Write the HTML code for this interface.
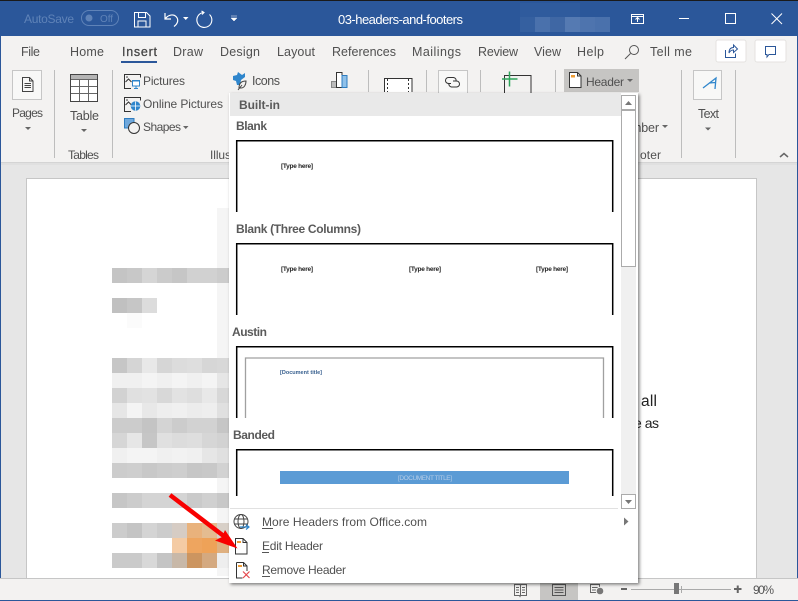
<!DOCTYPE html>
<html><head><meta charset="utf-8"><title>03-headers-and-footers</title>
<style>
html,body{margin:0;padding:0;background:#fff;width:798px;height:601px;overflow:hidden}
svg{display:block;font-family:"Liberation Sans",sans-serif}
.t{font-size:12.5px;fill:#505050}
.m{font-size:12px;fill:#505050}
.b{font-size:12px;font-weight:bold;fill:#5a5a5a}
.a{fill:#666}
</style></head><body>
<svg width="798" height="601" viewBox="0 0 798 601" xmlns="http://www.w3.org/2000/svg">
<defs><filter id="sh" x="-5%" y="-5%" width="110%" height="110%"><feDropShadow dx="1.5" dy="1.5" stdDeviation="1.5" flood-color="#000" flood-opacity=".5"/></filter></defs>
<!-- window -->
<rect width="798" height="601" fill="#e6e6e6"/>
<rect width="798" height="1" fill="#1a1a1a"/>
<rect y="1" width="798" height="35" fill="#2b579a"/>
<rect x="520" y="3" width="60" height="14" fill="#2f5b9d"/>
<rect x="520" y="17" width="15" height="15" fill="#3560a0"/>
<rect x="535" y="17" width="15" height="15" fill="#4a71ac"/>
<rect x="550" y="17" width="15" height="15" fill="#3f67a4"/>
<rect x="565" y="17" width="15" height="15" fill="#557ab2"/>
<rect x="580" y="17" width="15" height="15" fill="#4e74ae"/>
<rect x="595" y="17" width="15" height="15" fill="#4a71ac"/>
<!-- title bar -->
<text x="24" y="23" font-size="12" fill="#5f83b8" textLength="50">AutoSave</text>
<rect x="81.500" y="10.500" width="37" height="15" rx="7.500" fill="none" stroke="#5f83b8"/>
<circle cx="89" cy="18" r="3.500" fill="#5f83b8"/>
<text x="100" y="22" font-size="10" fill="#5f83b8" textLength="13">Off</text>
<path d="M134.500 12.500h12l3.500 3.500v11h-15.500zM138.500 12.500v5h7v-5M138 27v-6h8v6" fill="none" stroke="#fff"/>
<path d="M165 13v6h6M165.500 18.500c3-4 8-4.500 10.500-2 3 3 2 7-2 10" fill="none" stroke="#fff" stroke-width="1.200"/>
<path d="M183 17h5.500l-2.750 3z" fill="#fff"/>
<path d="M209.500 14.500A7.500 7.500 0 1 1 203.500 12.500M201.500 11l2.500 1.500-2 2" fill="none" stroke="#fff" stroke-width="1.100"/>
<path d="M231 16h6M231 18h6l-3 3z" fill="#fff" stroke="#fff" stroke-width=".5"/>
<text x="338" y="24" font-size="13" fill="#fff" textLength="125">03-headers-and-footers</text>
<path d="M631.500 14.500h12v9h-12zM631.500 16.500h12M637.500 22v-4M635.500 19.500l2-2 2 2" fill="none" stroke="#fff"/>
<rect x="679" y="18" width="10" height="1" fill="#fff"/>
<rect x="725.500" y="13.500" width="10" height="10" fill="none" stroke="#fff"/>
<path d="M771.500 13.500l10.500 10.500M782 13.500l-10.500 10.500" stroke="#fff" fill="none"/>
<!-- ribbon -->
<rect y="36" width="798" height="126" fill="#f3f2f1"/>
<rect y="162" width="798" height="1" fill="#d4d4d4"/>
<rect y="163" width="798" height="2" fill="#e0e0e0"/>
<rect y="36" width="1" height="565" fill="#2b579a"/>
<rect x="797" y="36" width="1" height="565" fill="#2b579a"/>
<!-- tabs -->
<g class="t">
<text x="21" y="56" textLength="19">File</text>
<text x="70" y="56" textLength="34">Home</text>
<text x="122" y="56" textLength="35" style="fill:#444;stroke:#444;stroke-width:.25">Insert</text>
<text x="173" y="56" textLength="30">Draw</text>
<text x="220" y="56" textLength="40">Design</text>
<text x="277" y="56" textLength="38">Layout</text>
<text x="332" y="56" textLength="64">References</text>
<text x="412" y="56" textLength="49">Mailings</text>
<text x="478" y="56" textLength="40">Review</text>
<text x="534" y="56" textLength="27">View</text>
<text x="577" y="56" textLength="27">Help</text>
<text x="650" y="56" textLength="42">Tell me</text>
</g>
<rect x="121" y="61" width="36" height="2" fill="#2b579a"/>
<circle cx="634" cy="50" r="4.500" fill="none" stroke="#555"/>
<path d="M630.500 53.500L625 59" stroke="#555" fill="none"/>
<rect x="716" y="40" width="30" height="22" rx="2" fill="#fff" stroke="#e4e2e0"/>
<path d="M725.500 50v7.500h10v-4M729 53c0-4 2-5.500 4.500-5.500v-2.500l4 4-4 3.500v-2.500c-2 0-3.500 1-4.500 3z" fill="none" stroke="#2b579a"/>
<rect x="755" y="40" width="31" height="22" rx="2" fill="#fff" stroke="#e4e2e0"/>
<path d="M765.500 46.500h10v8h-6.500l-2 2.500v-2.500h-1.500z" fill="none" stroke="#2b579a"/>
<!-- separators -->
<g fill="#bdbdbd">
<rect x="54" y="70" width="1" height="88"/><rect x="112" y="70" width="1" height="88"/>
<rect x="368" y="70" width="1" height="22"/><rect x="426" y="70" width="1" height="22"/>
<rect x="480" y="70" width="1" height="22"/><rect x="555" y="70" width="1" height="22"/>
<rect x="681" y="70" width="1" height="88"/><rect x="735" y="70" width="1" height="88"/>
</g>
<!-- pages -->
<rect x="12.500" y="70.500" width="29" height="29" fill="#f8f8f7" stroke="#c6c6c6"/>
<path d="M22.500 77.500h7l3.500 3.500v10.500h-10.500zM29.500 77.500v3.500h3.500M24.500 83.500h6.500M24.500 85.500h6.500M24.500 87.500h6.500" fill="none" stroke="#444"/>
<text x="12" y="117" class="m" textLength="31">Pages</text>
<path class="a" d="M25 127h6l-3 3z"/>
<!-- table -->
<rect x="70.500" y="74.500" width="27" height="27" fill="#fff" stroke="#444"/>
<rect x="71" y="75" width="26" height="4" fill="#b5b5b5"/>
<path d="M71 79.500h26M71 86.500h26M71 93.500h26M79.500 79v22M88.500 79v22" stroke="#666" fill="none"/>
<text x="70" y="120" class="t" textLength="29">Table</text>
<path class="a" d="M81 129h6l-3 3z"/>
<text x="68" y="159" class="m" textLength="31">Tables</text>
<!-- illustrations -->
<path d="M124.500 82v-7.500h16v3M124.500 82v6.500h6.500M125.500 82l3-3 3 3" fill="none" stroke="#333"/>
<circle cx="127" cy="77" r=".8" fill="#333"/>
<rect x="132.500" y="80.500" width="7" height="5.500" fill="#fff" stroke="#2f86cc"/><path d="M132 81h8M136 86v2M134 88.500h4" stroke="#2f86cc" fill="none"/>
<text x="143" y="85" class="m" textLength="42">Pictures</text>
<path d="M124.500 105v-7.500h16v3M124.500 105v6.500h6.500M125.500 105l3-3 3 3" fill="none" stroke="#333"/>
<circle cx="127" cy="100" r=".8" fill="#333"/>
<circle cx="135.500" cy="106" r="4.800" fill="#2f86cc"/><path d="M131 106h9M135.500 101.500v9" stroke="#fff" stroke-width=".8"/>
<text x="143" y="108" class="m" textLength="80">Online Pictures</text>
<rect x="124.500" y="118.500" width="9.500" height="9.500" fill="#6fa8dc" stroke="#2f7dc0"/>
<circle cx="134" cy="128" r="5.500" fill="#f3f2f1" stroke="#333"/>
<text x="143" y="131" class="m" textLength="38">Shapes</text>
<path class="a" d="M183 126h5.500l-2.750 3z"/>
<path d="M233 76l4-1 1-3 4 3 3-2v4l-4 3-1 5h-3l-1-4-3-1z" fill="#2f86cc"/>
<path d="M239 88c0-4 2-7 7-7 0 4-2 7-5 7h-2zM238 90l4-5" fill="#f3f2f1" stroke="#444"/>
<text x="252" y="85" class="t" textLength="28">Icons</text>
<rect x="331.500" y="81.500" width="5" height="6" fill="#bbb" stroke="#888"/>
<rect x="336.500" y="72.500" width="5.500" height="15" fill="#fff" stroke="#333"/>
<rect x="342" y="75.500" width="5" height="12" fill="#8fc1ea" stroke="#2f7dc0"/>
<text x="210" y="159" class="m" textLength="21">Illus</text>
<!-- partially hidden group -->
<path d="M384.500 92v-13.500h27.500V92" fill="#fff" stroke="#333"/>
<path d="M387.500 79v13M408.500 79v13" stroke="#333" stroke-dasharray="2 2" fill="none"/>
<rect x="438.500" y="70.500" width="29" height="23" fill="#f8f8f7" stroke="#c6c6c6"/>
<path d="M451 83.500h-2.500a3 3 0 0 1 0-6h5a3 3 0 0 1 2.500 4M453 81h3.500a3 3 0 0 1 0 6h-5a3 3 0 0 1-2.500-4" fill="none" stroke="#333"/>
<path d="M504.500 93v-17.500h26.500V93" fill="none" stroke="#333"/>
<path d="M502 79h15.500M509.500 71.500v15" stroke="#2da55a" stroke-width="1.500" fill="none"/>
<!-- header button -->
<rect x="564" y="69" width="75" height="23" fill="#c6c5c3"/>
<path d="M569.500 72.500h8l3.500 3.500v11.500h-11.500z" fill="#fff" stroke="#333"/>
<path d="M577.500 72.500v3.500h3.500" fill="none" stroke="#333"/>
<rect x="571" y="75" width="4" height="2.500" fill="#ed9b33"/>
<text x="586" y="86" class="m" textLength="38">Header</text>
<path class="a" d="M627 79h6l-3 3z"/>
<text x="631" y="132" class="t" textLength="28">mber</text>
<path class="a" d="M662 125h6l-3 3z"/>
<text x="640" y="159" class="m" textLength="21">oter</text>
<!-- text -->
<rect x="693.500" y="70.500" width="28" height="29" fill="#f8f8f7" stroke="#c6c6c6"/>
<path d="M703 88L716 78l-1 11M709 83l6.500-.500" fill="none" stroke="#2f86cc" stroke-width="1.300"/>
<text x="698" y="118" class="t" textLength="21">Text</text>
<path class="a" d="M705 127.500h6l-3 3z"/>
<path d="M780 157l4-3.500 4 3.500" fill="none" stroke="#666" stroke-width="1.500"/>
<!-- page -->
<rect x="26.500" y="178.500" width="730" height="410" fill="#fff" stroke="#c6c6c6"/>
<text x="641" y="406" font-size="15.500" fill="#222" textLength="16">all</text>
<text x="634" y="428" font-size="14" fill="#222" textLength="25">e as</text>
<!-- pixel blocks -->
<rect x="217" y="208" width="12" height="368" fill="#f5f5f5"/>
<g shape-rendering="crispEdges">
<g><rect x="112" y="268" width="15" height="15" fill="#c4c4c4"/><rect x="127" y="268" width="15" height="15" fill="#c8c8c8"/><rect x="142" y="268" width="15" height="15" fill="#d5d5d5"/><rect x="157" y="268" width="15" height="15" fill="#cbcbcb"/><rect x="172" y="268" width="15" height="15" fill="#c6c6c6"/><rect x="187" y="268" width="15" height="15" fill="#d1d1d1"/><rect x="202" y="268" width="15" height="15" fill="#d1d1d1"/><rect x="217" y="268" width="12" height="15" fill="#cccccc"/></g>
<g><rect x="112" y="298" width="15" height="15" fill="#c0c0c0"/><rect x="127" y="298" width="15" height="15" fill="#c6c6c6"/><rect x="142" y="298" width="15" height="15" fill="#dcdcdc"/><rect x="127" y="313" width="15" height="15" fill="#fbfbfb"/></g>
<g><rect x="112" y="358" width="15" height="15" fill="#c6c6c6"/><rect x="127" y="358" width="15" height="15" fill="#d5d5d5"/><rect x="142" y="358" width="15" height="15" fill="#e8e8e8"/><rect x="157" y="358" width="15" height="15" fill="#d6d6d6"/><rect x="172" y="358" width="15" height="15" fill="#dcdcdc"/><rect x="187" y="358" width="15" height="15" fill="#dedede"/><rect x="202" y="358" width="15" height="15" fill="#d6d6d6"/><rect x="217" y="358" width="12" height="15" fill="#d8d8d8"/></g>
<g><rect x="112" y="373" width="15" height="15" fill="#f0f0f0"/><rect x="127" y="373" width="15" height="15" fill="#f0f0f0"/><rect x="142" y="373" width="15" height="15" fill="#f4f4f4"/><rect x="157" y="373" width="15" height="15" fill="#f0f0f0"/><rect x="172" y="373" width="15" height="15" fill="#f4f4f4"/><rect x="187" y="373" width="15" height="15" fill="#f0f0f0"/><rect x="202" y="373" width="15" height="15" fill="#f4f4f4"/><rect x="217" y="373" width="12" height="15" fill="#e6e6e6"/></g>
<g><rect x="112" y="388" width="15" height="15" fill="#d2d2d2"/><rect x="127" y="388" width="15" height="15" fill="#e0e0e0"/><rect x="142" y="388" width="15" height="15" fill="#e2e2e2"/><rect x="157" y="388" width="15" height="15" fill="#d8d8d8"/><rect x="172" y="388" width="15" height="15" fill="#e2e2e2"/><rect x="187" y="388" width="15" height="15" fill="#dedede"/><rect x="202" y="388" width="15" height="15" fill="#e8e8e8"/><rect x="217" y="388" width="12" height="15" fill="#d8d8d8"/></g>
<g><rect x="112" y="403" width="15" height="15" fill="#e6e6e6"/><rect x="127" y="403" width="15" height="15" fill="#f4f4f4"/><rect x="142" y="403" width="15" height="15" fill="#e8e8e8"/><rect x="157" y="403" width="15" height="15" fill="#eeeeee"/><rect x="172" y="403" width="15" height="15" fill="#f0f0f0"/><rect x="187" y="403" width="15" height="15" fill="#ececec"/><rect x="202" y="403" width="15" height="15" fill="#eeeeee"/><rect x="217" y="403" width="12" height="15" fill="#e0e0e0"/></g>
<g><rect x="112" y="418" width="15" height="15" fill="#cccccc"/><rect x="127" y="418" width="15" height="15" fill="#cccccc"/><rect x="142" y="418" width="15" height="15" fill="#c4c4c4"/><rect x="157" y="418" width="15" height="15" fill="#d4d4d4"/><rect x="172" y="418" width="15" height="15" fill="#cccccc"/><rect x="187" y="418" width="15" height="15" fill="#d2d2d2"/><rect x="202" y="418" width="15" height="15" fill="#d2d2d2"/><rect x="217" y="418" width="12" height="15" fill="#c6c6c6"/></g>
<g><rect x="112" y="433" width="15" height="15" fill="#d6d6d6"/><rect x="127" y="433" width="15" height="15" fill="#e6e6e6"/><rect x="142" y="433" width="15" height="15" fill="#c6c6c6"/><rect x="157" y="433" width="15" height="15" fill="#e0e0e0"/><rect x="172" y="433" width="15" height="15" fill="#dcdcdc"/><rect x="187" y="433" width="15" height="15" fill="#dedede"/><rect x="202" y="433" width="15" height="15" fill="#d6d6d6"/><rect x="217" y="433" width="12" height="15" fill="#d2d2d2"/></g>
<g><rect x="112" y="448" width="15" height="15" fill="#f0f0f0"/><rect x="127" y="448" width="15" height="15" fill="#f4f4f4"/><rect x="142" y="448" width="15" height="15" fill="#f4f4f4"/><rect x="157" y="448" width="15" height="15" fill="#f0f0f0"/><rect x="172" y="448" width="15" height="15" fill="#f2f2f2"/><rect x="187" y="448" width="15" height="15" fill="#f0f0f0"/><rect x="202" y="448" width="15" height="15" fill="#e6e6e6"/><rect x="217" y="448" width="12" height="15" fill="#e0e0e0"/></g>
<g><rect x="112" y="463" width="15" height="15" fill="#cccccc"/><rect x="127" y="463" width="15" height="15" fill="#cecece"/><rect x="142" y="463" width="15" height="15" fill="#c8c8c8"/><rect x="157" y="463" width="15" height="15" fill="#cccccc"/><rect x="172" y="463" width="15" height="15" fill="#cecece"/><rect x="187" y="463" width="15" height="15" fill="#c6c6c6"/><rect x="202" y="463" width="15" height="15" fill="#c8c8c8"/><rect x="217" y="463" width="12" height="15" fill="#d2d2d2"/></g>
<g><rect x="112" y="493" width="15" height="15" fill="#c6c6c6"/><rect x="127" y="493" width="15" height="15" fill="#cccccc"/><rect x="142" y="493" width="15" height="15" fill="#d4d4d4"/><rect x="157" y="493" width="15" height="15" fill="#d4d4d4"/><rect x="172" y="493" width="15" height="15" fill="#d4d4d4"/><rect x="187" y="493" width="15" height="15" fill="#cacaca"/><rect x="202" y="493" width="15" height="15" fill="#d0d0d0"/><rect x="217" y="493" width="12" height="15" fill="#c8c8c8"/></g>
<g><rect x="112" y="523" width="15" height="15" fill="#cccccc"/><rect x="127" y="523" width="15" height="15" fill="#c4c4c4"/><rect x="142" y="523" width="15" height="15" fill="#d4d4d4"/><rect x="157" y="523" width="15" height="15" fill="#cccccc"/><rect x="172" y="523" width="15" height="15" fill="#d6ccc4"/><rect x="187" y="523" width="15" height="15" fill="#e9b27c"/><rect x="202" y="523" width="15" height="15" fill="#e4bc90"/><rect x="217" y="523" width="12" height="15" fill="#d8d0c8"/></g>
<g><rect x="172" y="538" width="15" height="15" fill="#f4cba4"/><rect x="187" y="538" width="15" height="15" fill="#eea55f"/><rect x="202" y="538" width="15" height="15" fill="#eea258"/><rect x="217" y="538" width="12" height="15" fill="#dfb080"/></g>
<g><rect x="112" y="553" width="15" height="15" fill="#cacaca"/><rect x="127" y="553" width="15" height="15" fill="#cacaca"/><rect x="142" y="553" width="15" height="15" fill="#d8d8d8"/><rect x="157" y="553" width="15" height="15" fill="#c4c4c4"/><rect x="172" y="553" width="15" height="15" fill="#c8b8a8"/><rect x="187" y="553" width="15" height="15" fill="#cc9560"/><rect x="202" y="553" width="15" height="15" fill="#d4a980"/><rect x="217" y="553" width="12" height="15" fill="#eeeeee"/></g>
</g>
<!-- status bar -->
<rect y="578" width="798" height="22" fill="#f3f2f1"/>
<rect y="578" width="798" height="1" fill="#c6c6c6"/>
<rect y="600" width="798" height="1" fill="#2b579a"/>
<rect x="540" y="583" width="38" height="17" fill="#c6c5c3"/>
<path d="M514.500 584.500h5.500l.5 1 .5-1h5.500v11h-6l-.5 1-.5-1h-5zM520.500 585v11M516 587.500h3M516 590h3M516 592.500h3M522 587.500h3M522 590h3M522 592.500h3" fill="none" stroke="#666"/>
<path d="M552.500 584.500h13v11h-13zM554.500 587.500h9M554.500 590h9M554.500 592.500h9" fill="none" stroke="#555"/>
<path d="M590.500 584.500h9v8h-9zM592 587.500h6M592 590h4" fill="none" stroke="#666"/>
<circle cx="600" cy="591" r="3.800" fill="#777" stroke="#f3f2f1"/>
<rect x="621" y="588" width="6" height="2" fill="#666"/>
<rect x="631" y="589" width="100" height="1" fill="#aaa"/>
<rect x="681" y="586" width="1" height="7" fill="#aaa"/>
<rect x="674" y="583" width="5" height="11" fill="#777"/>
<path d="M734 589h7.500M737.750 585.500v7.500" stroke="#666" stroke-width="2" fill="none"/>
<text x="753" y="594" font-size="12" fill="#555" textLength="21">90%</text>
<!-- dropdown -->
<rect x="229" y="93" width="409" height="490" fill="#fff" filter="url(#sh)"/>
<rect x="230" y="93" width="391" height="23" fill="#e9e9e9"/>
<text x="239" y="109" class="b" textLength="41">Built-in</text>
<text x="236" y="130" class="b" textLength="31">Blank</text>
<path d="M236.700 212V140.700H612.700V212" fill="none" stroke="#000" stroke-width="1.500"/>
<text x="281" y="168" font-size="6.500" font-weight="bold" fill="#222" textLength="32">[Type here]</text>
<text x="236" y="233" class="b" textLength="125">Blank (Three Columns)</text>
<path d="M236.700 315V243.700H612.700V315" fill="none" stroke="#000" stroke-width="1.500"/>
<text x="281" y="271" font-size="6.500" font-weight="bold" fill="#222" textLength="32">[Type here]</text>
<text x="409" y="271" font-size="6.500" font-weight="bold" fill="#222" textLength="32">[Type here]</text>
<text x="536" y="271" font-size="6.500" font-weight="bold" fill="#222" textLength="32">[Type here]</text>
<text x="232" y="336" class="b" textLength="35">Austin</text>
<path d="M236.700 418V346.700H612.700V418" fill="none" stroke="#000" stroke-width="1.500"/>
<path d="M245.500 418V358H603.500V418" fill="none" stroke="#a0a0a0" stroke-width="1.300"/>
<text x="280" y="374" font-size="5.500" font-weight="bold" fill="#38608f" textLength="42">[Document title]</text>
<text x="233" y="439" class="b" textLength="42">Banded</text>
<path d="M236.700 496V449.700H612.700V496" fill="none" stroke="#000" stroke-width="1.500"/>
<rect x="280" y="471" width="289" height="13" fill="#5b9bd5"/>
<text x="398" y="480" font-size="6.500" fill="#b5cce6" textLength="54">[DOCUMENT TITLE]</text>
<!-- scrollbar -->
<rect x="621" y="95" width="15" height="414" fill="#f0f0f0"/>
<rect x="621.500" y="95.500" width="14" height="14" fill="#fff" stroke="#ababab"/>
<path d="M625 105h7l-3.500-4z" fill="#777"/>
<rect x="621.500" y="110.500" width="14" height="156" fill="#fff" stroke="#ababab"/>
<rect x="621.500" y="494.500" width="14" height="14" fill="#fff" stroke="#ababab"/>
<path d="M625 500h7l-3.500 4z" fill="#777"/>
<rect x="230" y="508" width="388" height="1" fill="#e1e1e1"/>
<!-- menu -->
<circle cx="241" cy="521.500" r="7" fill="none" stroke="#444"/>
<ellipse cx="241" cy="521.500" rx="3" ry="7" fill="none" stroke="#444"/>
<path d="M234.500 519h13M234.500 524h13" stroke="#444" fill="none"/>
<path d="M240 527h9M246 524.500l3 2.500-3 2.500" fill="none" stroke="#2f86cc" stroke-width="1.200"/>
<text x="262" y="526" class="m" textLength="165">More Headers from Office.com</text>
<rect x="262" y="528" width="11" height="1" fill="#555"/>
<path d="M624 517.500l4.500 4-4.500 4z" fill="#777"/>
<path d="M235.500 538.500h7.500l4 4v11.500h-11.500z" fill="#fff" stroke="#333"/>
<path d="M243 538.500v4h4" fill="none" stroke="#333"/>
<rect x="237" y="541" width="4" height="2" fill="#ed9b33"/>
<text x="262" y="550" class="m" textLength="61">Edit Header</text>
<rect x="262" y="552" width="7" height="1" fill="#555"/>
<path d="M236.500 562.500h7l3.500 3.500v5M236.500 562.500v15.500h6" fill="none" stroke="#333"/>
<path d="M243.500 562.500v3.500h3.500" fill="none" stroke="#333"/>
<rect x="238" y="565" width="4" height="2" fill="#ed9b33"/>
<path d="M243 571.500l6.500 6.500M249.500 571.500l-6.500 6.500" stroke="#e5484d" stroke-width="1.200" fill="none"/>
<text x="262" y="574" class="m" textLength="84">Remove Header</text>
<rect x="262" y="576" width="8" height="1" fill="#555"/>
<!-- red arrow -->
<path d="M170 495L225 537" stroke="#f80000" stroke-width="4.500" fill="none"/>
<path d="M237.500 548.500L215 540.500 L222 537 L225 530z" fill="#f80000"/>
</svg>
</body></html>
